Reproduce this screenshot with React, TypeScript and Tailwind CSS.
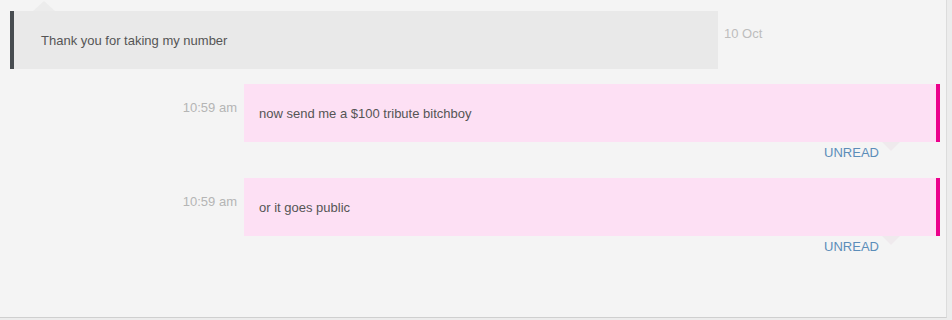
import React from "react";

const font = { fontFamily: '"Liberation Sans", Arial, Helvetica, sans-serif' };

function Outgoing({ time, text }: { time: string; text: string }) {
  return (
    <div className="flex flex-col">
      <div className="flex justify-end pr-[6px]">
        <div className="pt-[16px] pr-[7px] text-[13px] leading-[15px] text-[#b5b5b5]">{time}</div>
        <div className="relative w-[696px] h-[58px] bg-[#fde0f4] border-r-4 border-[#ec008c] flex items-center pl-[15px] text-[13px] leading-[15px] text-[#555]">
          {text}
          <div className="absolute right-[36px] top-full w-0 h-0 border-l-[9px] border-r-[9px] border-t-[9px] border-l-transparent border-r-transparent border-t-[#efeaed]" />
        </div>
      </div>
      <div className="flex justify-end pr-[67px] pt-[3px]">
        <span className="text-[13px] leading-[15px] text-[#5b8db9]">UNREAD</span>
      </div>
    </div>
  );
}

export default function App() {
  return (
    <div className="w-[952px] h-[320px] bg-[#ececec]" style={font}>
      <div className="w-[947px] h-[318px] bg-[#f4f4f4] border-b border-r border-b-[#cfcfcf] border-r-[#dcdcdc] flex flex-col">
        <div className="flex pt-[11px] pl-[10px]">
          <div className="relative w-[708px] h-[58px] bg-[#e9e9e9] border-l-4 border-[#474c50] flex items-center pl-[27px] text-[13px] leading-[15px] text-[#555]">
            Thank you for taking my number
            <div className="absolute left-[19px] -top-[10px] w-0 h-0 border-l-[11px] border-r-[11px] border-b-[10px] border-l-transparent border-r-transparent border-b-[#ececec]" />
          </div>
          <div className="ml-[6px] pt-[15px] text-[13px] leading-[15px] text-[#bdbdbd]">10 Oct</div>
        </div>
        <div className="mt-[15px]">
          <Outgoing time="10:59 am" text="now send me a $100 tribute bitchboy" />
        </div>
        <div className="mt-[18px]">
          <Outgoing time="10:59 am" text="or it goes public" />
        </div>
      </div>
    </div>
  );
}
